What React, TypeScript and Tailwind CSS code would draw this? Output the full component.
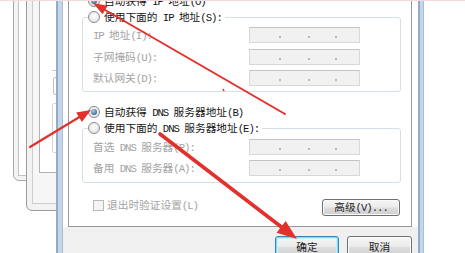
import React from 'react';

const ASCII = /^[\x20-\x7e]+$/;

// SimSun-like mix: CJK at full width, Latin at half width
function Txt({ s, className = '' }: { s: string; className?: string }) {
  const parts = s.split(/([\x20-\x7e]+)/).filter(Boolean);
  return (
    <span className={`whitespace-pre ${className}`}>
      {parts.map((p, i) =>
        ASCII.test(p) ? (
          <span key={i} className="font-['Liberation_Mono',monospace] tracking-[-1.05px]">
            {p}
          </span>
        ) : (
          <span key={i}>{p}</span>
        )
      )}
    </span>
  );
}

function Radio({ checked = false }: { checked?: boolean }) {
  return (
    <span className="flex h-[12px] w-[12px] shrink-0 items-center justify-center rounded-full border border-[#8b8b8b] bg-[radial-gradient(circle_at_50%_40%,#ffffff,#dcdcdc)]">
      {checked && (
        <span className="h-[6px] w-[6px] rounded-full bg-[radial-gradient(circle_at_40%_35%,#a6d0f2,#1a4166)]" />
      )}
    </span>
  );
}

function RadioRow({ label, checked, className = '' }: { label: string; checked?: boolean; className?: string }) {
  return (
    <div className={`flex h-[12px] items-center ${className}`}>
      <span className="flex items-center gap-[4px] bg-white pr-[3px]">
        <Radio checked={checked} />
        <Txt s={label} className="text-[#151515]" />
      </span>
    </div>
  );
}

function IpField() {
  return (
    <div className="flex h-[16px] w-[111px] items-center border border-[#d8d8d8] border-t-[#c4c4c4] bg-[#f1f1f1]">
      <span className="w-[29px]" />
      <span className="mt-[3px] h-[2px] w-[2px] bg-[#b8b8b8]" />
      <span className="w-[27px]" />
      <span className="mt-[3px] h-[2px] w-[2px] bg-[#b8b8b8]" />
      <span className="w-[25px]" />
      <span className="mt-[3px] h-[2px] w-[2px] bg-[#b8b8b8]" />
    </div>
  );
}

function FieldRow({ label, className = '' }: { label: string; className?: string }) {
  return (
    <div className={`flex h-[16px] items-center pl-[10px] ${className}`}>
      <Txt s={label} className="w-[156px] text-[#a3a3a3]" />
      <IpField />
    </div>
  );
}

function BackWindows() {
  return (
    <div className="relative h-full w-[56px] shrink-0 overflow-hidden bg-white">
      {/* window A */}
      <div className="absolute left-[13px] top-[-10px] h-[191px] w-[80px] rounded-bl-[6px] border border-[#a9a9a9] bg-[#f3f3f3]" />
      <div className="absolute left-[18px] top-[-10px] h-[186px] w-[70px] border-b border-l border-[#c2c2c2] bg-white" />
      {/* window B */}
      <div className="absolute left-[26px] top-[-10px] h-[221px] w-[60px] rounded-bl-[6px] border border-[#9c9c9c] bg-[#f2f2f2]" />
      <div className="absolute left-[32px] top-[-10px] h-[214px] w-[50px] border-b border-l border-[#cdcdcd] bg-[#f6f6f6]" />
      <div className="absolute left-[39px] top-[-10px] h-[183px] w-[40px] border-b border-l border-[#b3b3b3] bg-white" />
      {/* bits of controls */}
      <div className="absolute left-[52px] top-[70px] h-[1px] w-[6px] bg-[#c8c8c8]" />
      <div className="absolute left-[53px] top-[77px] h-[18px] w-[8px] rounded-[2px] border border-[#c0c0c0]" />
      <div className="absolute left-[52px] top-[103px] h-[50px] w-[8px] rounded-[2px] border border-[#d6d6d6]" />
    </div>
  );
}

function arrow(x1: number, y1: number, x2: number, y2: number, len: number, wid: number) {
  const dx = x2 - x1;
  const dy = y2 - y1;
  const l = Math.hypot(dx, dy);
  const ux = dx / l;
  const uy = dy / l;
  const bx = x2 - ux * len;
  const by = y2 - uy * len;
  const px = (-uy * wid) / 2;
  const py = (ux * wid) / 2;
  return {
    line: { x1, y1, x2: bx + ux * 2, y2: by + uy * 2 },
    head: `${x2},${y2} ${bx + px},${by + py} ${bx - px},${by - py}`,
  };
}

function Arrows() {
  const items = [
    { a: arrow(285, 114, 93, 3, 14, 10), w: 2 },
    { a: arrow(30, 147, 91, 110, 14, 11), w: 2.2 },
    { a: arrow(160, 134, 297, 239, 20, 15), w: 3.6 },
  ];
  return (
    <svg className="pointer-events-none absolute inset-0" width="465" height="253" viewBox="0 0 465 253">
      {items.map(({ a, w }, i) => (
        <g key={i}>
          <line {...a.line} stroke="#e2302c" strokeWidth={w} strokeLinecap="round" />
          <polygon points={a.head} fill="#e2302c" />
        </g>
      ))}
      <line x1="223" y1="89" x2="224" y2="91" stroke="#e2302c" strokeWidth="1.5" />
    </svg>
  );
}

function Button({ children, primary = false, className = '' }: { children: React.ReactNode; primary?: boolean; className?: string }) {
  return (
    <div
      className={`flex items-center justify-center rounded-[3px] border bg-[linear-gradient(#f6f6f6,#ebebeb_48%,#dddddd_52%,#cfcfcf)] text-[#222] ${
        primary
          ? 'border-[#3c7fb1] shadow-[inset_0_0_0_1px_#7ee0f8,inset_0_0_0_2px_#c6eefb]'
          : 'border-[#707070] shadow-[inset_0_0_0_1px_#fbfbfb]'
      } ${className}`}
    >
      {children}
    </div>
  );
}

export default function App() {
  return (
    <div className="relative flex h-[253px] w-[465px] overflow-hidden bg-white font-['Noto_Sans_CJK_SC',sans-serif] text-[10.7px] leading-[12px]">
      <BackWindows />
      <div className="h-full w-[7px] shrink-0 border-l-2 border-r border-l-[#94abc6] border-r-[#a8bed6] bg-[#c3d6eb]" />

      {/* dialog */}
      <div className="flex h-full w-[355px] shrink-0 flex-col">
        <div className="h-[227px] shrink-0 bg-white">
          <div className="ml-[5px] flex h-[227px] w-[344px] flex-col border-b border-l border-r border-[#9a9a9a]">
            <RadioRow label="自动获得 IP 地址(O)" checked className="-mt-[5px] ml-[19px]" />

            <div className="ml-[13px] mt-[10px] w-[319px] rounded-[3px] border border-[#d5dfe5] pb-[5px]">
              <RadioRow label="使用下面的 IP 地址(S):" className="-mt-[7px] ml-[5px]" />
              <FieldRow label="IP 地址(I):" className="mt-[4px]" />
              <FieldRow label="子网掩码(U):" className="mt-[6px]" />
              <FieldRow label="默认网关(D):" className="mt-[5px]" />
            </div>

            <RadioRow label="自动获得 DNS 服务器地址(B)" checked className="ml-[19px] mt-[14px]" />

            <div className="ml-[13px] mt-[10px] w-[319px] rounded-[3px] border border-[#d5dfe5] pb-[6px]">
              <RadioRow label="使用下面的 DNS 服务器地址(E):" className="-mt-[7px] ml-[5px]" />
              <FieldRow label="首选 DNS 服务器(P):" className="mt-[5px]" />
              <FieldRow label="备用 DNS 服务器(A):" className="mt-[5px]" />
            </div>

            <div className="ml-[13px] mt-[16px] flex w-[319px] items-start justify-between">
              <div className="flex h-[12px] items-center gap-[3px] pl-[11px]">
                <span className="h-[11px] w-[11px] border border-[#b9b9b9] bg-[#f4f4f4]" />
                <Txt s="退出时验证设置(L)" className="text-[#a3a3a3]" />
              </div>
              <Button className="mr-[1px] h-[17px] w-[78px]">
                <Txt s="高级(V)..." />
              </Button>
            </div>
          </div>
        </div>

        <div className="flex flex-1 justify-end gap-[8px] bg-[#f0f0f0] pr-[6px] pt-[9px]">
          <Button primary className="h-[22px] w-[64px]">
            <Txt s="确定" />
          </Button>
          <Button className="h-[22px] w-[65px]">
            <Txt s="取消" />
          </Button>
        </div>
      </div>

      <div className="h-full w-[6px] shrink-0 border-l-2 border-r border-l-[#94abc6] border-r-[#a8bed6] bg-[#c3d6eb]" />
      <div className="flex-1 bg-white" />

      <div className="pointer-events-none absolute left-0 right-0 top-0 h-[1px] bg-[#f3dcdc]" />
      <Arrows />
    </div>
  );
}
